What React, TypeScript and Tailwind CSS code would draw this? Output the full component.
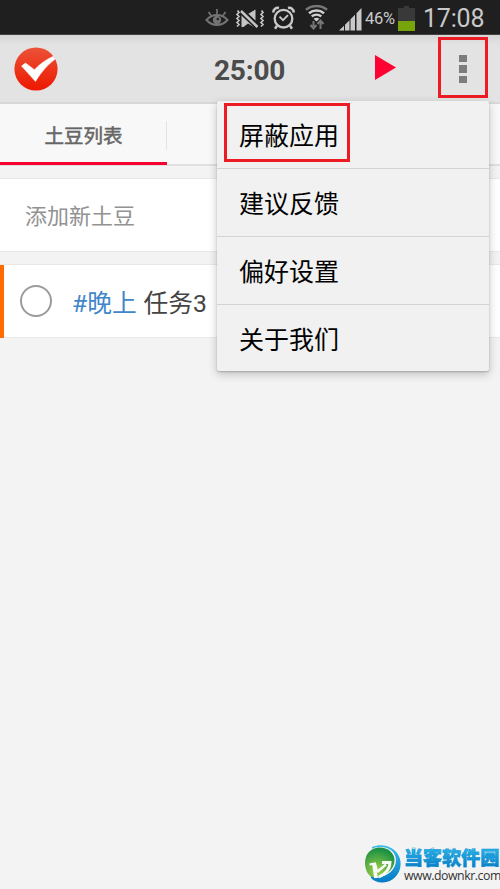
import { useState } from "react";

interface Task {
  id: string;
  tag: string;
  title: string;
  done: boolean;
}

const MENU_ITEMS = ["屏蔽应用", "建议反馈", "偏好设置", "关于我们"];

const INITIAL_TASKS: Task[] = [{ id: "1", tag: "#晚上", title: "任务3", done: false }];

function EyeIcon() {
  return (
    <svg width="24" height="20" viewBox="0 0 24 20" fill="none" stroke="#737373" strokeWidth="2">
      <path d="M1.5 12C5 8 8.500 7 12 7S19 8 22.500 12C19 16 15.500 17 12 17S5 16 1.500 12Z" />
      <circle cx="12" cy="12" r="4.200" fill="#737373" stroke="none" />
      <circle cx="12.800" cy="11" r="1.200" fill="#1f1f1f" stroke="none" />
      <path d="M12 6V1M6 7.500L3.500 4M18 7.500L20.500 4" strokeWidth="1.700" />
    </svg>
  );
}

function MuteIcon() {
  return (
    <svg width="30" height="20" viewBox="0 0 30 20">
      <path d="M6.500 1.500V18H8.500L13 14.500L20.500 19V0.500L13 5Z" fill="#c4c4c4" />
      <path d="M4 0L24 19" stroke="#1f1f1f" strokeWidth="6" />
      <path d="M6 2L22.500 18" stroke="#c4c4c4" strokeWidth="2.600" />
      <path
        d="M2.500 1.500L4 3.500L2 5.500L4 7.500L2 9.500L4 11.500L2 13.500L4 15.500L2 17.500M26.500 1.500L28 3.500L26 5.500L28 7.500L26 9.500L28 11.500L26 13.500L28 15.500L26 17.500"
        fill="none"
        stroke="#c4c4c4"
        strokeWidth="1.700"
      />
    </svg>
  );
}

function AlarmIcon() {
  return (
    <svg width="24" height="24" viewBox="0 0 24 24" fill="none" stroke="#c8c8c8">
      <circle cx="11.500" cy="12.700" r="8.800" strokeWidth="2.300" />
      <path d="M1.300 6.400A4.500 4.500 0 0 1 7 2M21.700 6.400A4.500 4.500 0 0 0 16 2" strokeWidth="2.600" />
      <path d="M7.500 10.700L11 14.200L16 9.200" strokeWidth="1.900" />
      <path d="M5 19.700L3 22.700M18 19.700L20 22.700" strokeWidth="2.500" />
    </svg>
  );
}

function WifiIcon() {
  return (
    <svg width="24" height="25" viewBox="0 0 24 25" fill="none">
      <path d="M1 4.800C7.300 -0.200 15.700 -0.200 22 4.800" stroke="#777" strokeWidth="2.600" />
      <path d="M4 8.200C8.400 4.500 14.600 4.500 19 8.200" stroke="#cfcfcf" strokeWidth="2.600" />
      <path d="M6.700 11.400C9.500 9.200 13.500 9.200 16.300 11.400" stroke="#cfcfcf" strokeWidth="2.400" />
      <path d="M8.500 13.700Q11.500 11.700 14.500 13.700L11.500 16.500Z" fill="#cfcfcf" />
      <path d="M8.500 16V23M5.500 20L8.500 23.500L11.500 20M15.500 24V16M12.500 19L15.500 15.500L18.500 19" stroke="#777" strokeWidth="2" />
    </svg>
  );
}

function SignalIcon() {
  return (
    <svg width="23" height="23" viewBox="0 0 23 23" fill="#c9c9c9">
      <path d="M0 22.500L5 17.700V22.500ZM6 16.700L10.500 12.300V22.500H6ZM11.500 11.300L16 6.700V22.500H11.500ZM17.500 5.200L22.500 0V22.500H17.500Z" />
    </svg>
  );
}

function BatteryIcon() {
  return (
    <svg width="17" height="25" viewBox="0 0 17 25">
      <path d="M6 0H11V2H17V15H0V2H6Z" fill="#393939" />
      <path d="M0 15H17V25H0Z" fill="#77a30b" />
    </svg>
  );
}

function StatusBar() {
  return (
    <div className="h-[35px] shrink-0 border-b border-[#454143] bg-[#1f1f1f] text-[#c9c9c9]">
      <div className="flex h-full items-start pl-[205px]">
        <div className="mt-[8px] w-[30px]"><EyeIcon /></div>
        <div className="mt-[9px] w-[37px]"><MuteIcon /></div>
        <div className="mt-[6px] w-[33px]"><AlarmIcon /></div>
        <div className="mt-[5px] w-[34px]"><WifiIcon /></div>
        <div className="mt-[8px] w-[26px]"><SignalIcon /></div>
        <span className="mt-[8px] w-[33px] whitespace-nowrap text-[16.500px] leading-[22px] tracking-[-0.3px]">46%</span>
        <div className="mt-[6px] w-[25px]"><BatteryIcon /></div>
        <span className="mt-[4px] text-[25px] leading-[30px] tracking-[-0.2px]">17:08</span>
      </div>
    </div>
  );
}

function AppLogo() {
  return (
    <svg width="44" height="44" viewBox="0 0 44 44">
      <defs>
        <linearGradient id="logo" x1="0" y1="0" x2="0" y2="1">
          <stop offset="0" stopColor="#ec5238" />
          <stop offset="1" stopColor="#ec1800" />
        </linearGradient>
      </defs>
      <circle cx="22" cy="22" r="21.600" fill="url(#logo)" />
      <path d="M7.500 19L11.500 16L20.500 22.700C26 17 32 12.500 39.300 9.300L41 12.300C34 17.500 28 24 21.500 34.500Z" fill="#fff" stroke="#fff" strokeWidth="0.500" />
    </svg>
  );
}

function SiteBadge() {
  return (
    <div className="flex items-start">
      <svg width="38" height="39" viewBox="0 0 38 39">
        <defs>
          <linearGradient id="badgeBlue" x1="0" y1="0" x2="0" y2="1">
            <stop offset="0" stopColor="#38bdec" />
            <stop offset="1" stopColor="#057bc4" />
          </linearGradient>
          <radialGradient id="badgeGreen" cx="0.4" cy="0.8" r="0.75">
            <stop offset="0" stopColor="#a5d044" />
            <stop offset="1" stopColor="#1b9144" />
          </radialGradient>
        </defs>
        <path d="M8 2C20 -3 33 3 36 14C39 27 30 37 19 37.500C14 37.800 10 36 7 33Z" fill="url(#badgeBlue)" />
        <path d="M5 30C-3 17 2 3 14 2C25 1 32 7 32 15C32 25 24 31 13 33Z" fill="#f3f3f3" />
        <path d="M3.500 28C-2 17 2 5 12 3C22 1 30 7 30.500 15C30.500 23 25 28 17 31L7 32Z" fill="url(#badgeGreen)" />
        <path d="M5.500 19.500L11 18.500L13 26" fill="none" stroke="#f7fbf5" strokeWidth="2.200" />
        <path d="M9.800 18.500L12 33" fill="none" stroke="#f7fbf5" strokeWidth="3.600" />
        <path d="M13 27L22 19.500" fill="none" stroke="#f7fbf5" strokeWidth="2.600" />
        <path d="M18 17.500H26C26 23 23 28 15 32" fill="none" stroke="#f7fbf5" strokeWidth="3" />
      </svg>
      <div className="ml-[2px] mt-[4px] w-[97px]">
        <div className="whitespace-nowrap bg-linear-to-b from-[#27b2e8] to-[#0879c2] bg-clip-text text-[19.100px] font-black leading-[20px] text-transparent [-webkit-text-stroke:0.4px_#1593d4]">
          当客软件园
        </div>
        <div className="whitespace-nowrap font-['Open_Sans',sans-serif] text-[12.300px] font-medium leading-[13px] tracking-[-0.450px] text-[#333]">
          www.downkr.com
        </div>
      </div>
    </div>
  );
}

export default function App() {
  const [tasks, setTasks] = useState<Task[]>(INITIAL_TASKS);
  const [draft, setDraft] = useState("");
  const [menuOpen, setMenuOpen] = useState(true);

  const toggleTask = (id: string) => {
    setTasks(tasks.map((task) => (task.id === id ? { ...task, done: !task.done } : task)));
  };

  return (
    <div className="relative flex h-[889px] w-[500px] flex-col overflow-hidden bg-[#f3f3f3] font-[Roboto,'Noto_Sans_CJK_SC',sans-serif]">
      <StatusBar />

      <header className="flex h-[69px] shrink-0 items-start border-b-2 border-[#d8d8d8] bg-linear-to-b from-[#d6d6d6] via-[#e3e3e3] via-15% to-[#e3e3e3] pl-[14px]">
        <div className="mt-[12px]"><AppLogo /></div>
        <h1 className="ml-[156px] mt-[19px] w-[161px] text-[28px] font-bold leading-[33px] tracking-[-0.2px] text-[#4b4b4b]">25:00</h1>
        <button className="mt-[20px]" aria-label="Start">
          <svg width="21" height="25" viewBox="0 0 21 25"><path d="M0 0L21 12.500L0 25Z" fill="#ff0033" /></svg>
        </button>
        <button
          onClick={() => setMenuOpen(!menuOpen)}
          aria-label="Menu"
          className="ml-[42px] mt-[2px] flex h-[61px] w-[50px] flex-col items-center justify-center gap-[3px] border-3 border-[#ed1c24] pt-[3px]"
        >
          <span className="size-[7.500px] bg-[#7c7c7c]" />
          <span className="size-[7.500px] bg-[#7c7c7c]" />
          <span className="size-[7.500px] bg-[#7c7c7c]" />
        </button>
      </header>

      <nav className="flex h-[62px] shrink-0 border-b-2 border-[#e0e0e0] bg-[#f8f8f8]">
        <button className="-mb-px flex w-[167px] items-center justify-center border-b-3 border-[#f5002f] pt-[8px] text-[19.500px] text-[#666] [-webkit-text-stroke:0.5px_#666]">
          土豆列表
        </button>
        <span className="-ml-px mt-[17px] h-[29px] w-px bg-[#e3e3e3]" />
      </nav>

      <main>
        <input
          value={draft}
          onChange={(e) => setDraft(e.target.value)}
          placeholder="添加新土豆"
          className="mt-[12px] block h-[74px] w-full border-y border-[#e8e8e8] bg-white pl-[25px] pt-[2px] text-[22px] outline-none placeholder:text-[#929292]"
        />
        <ul className="mt-[12px]">
          {tasks.map((task) => (
            <li key={task.id} className="flex h-[74px] items-center border-y border-[#e8e8e8] bg-white">
              <span className="h-[73px] w-[4px] bg-[#ff6b00]" />
              <button
                onClick={() => toggleTask(task.id)}
                aria-label="Done"
                className={`ml-[16px] size-[32px] rounded-full border-2 border-[#9b9b9b] ${task.done ? "bg-[#9b9b9b]" : ""}`}
              />
              <p className="ml-[20px] pt-[5px] text-[24.700px] leading-[36px] text-[#444]">
                <span className="mr-[7px] text-[#3f86cb]">{task.tag}</span>
                {task.title}
              </p>
            </li>
          ))}
        </ul>
      </main>

      {menuOpen && (
        <div className="absolute left-[217px] top-[101px] w-[272px] rounded-[2px] bg-[#f1f1f1] shadow-[0_3px_10px_rgba(0,0,0,0.22),0_1px_2px_rgba(0,0,0,0.2)]">
          {MENU_ITEMS.map((item, i) => (
            <button
              key={item}
              className={`flex w-full pl-[7px] pt-[2px] text-[25px] text-black ${
                i < MENU_ITEMS.length - 1 ? "h-[68px] border-b border-[#d4d4d4]" : "h-[66px]"
              }`}
            >
              <span
                className={`flex h-[59px] w-[126px] items-center whitespace-nowrap border-3 pl-[12px] pt-[8px] leading-[36px] ${
                  i === 0 ? "border-[#ed1c24]" : "border-transparent"
                }`}
              >
                {item}
              </span>
            </button>
          ))}
        </div>
      )}

      <div className="absolute left-[364px] top-[845px]">
        <SiteBadge />
      </div>
    </div>
  );
}
